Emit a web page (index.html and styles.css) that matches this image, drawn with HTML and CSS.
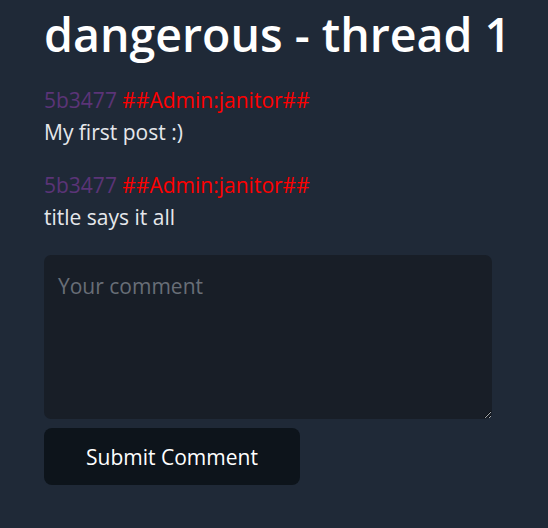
FILE: index.html
```html
<!DOCTYPE html>
<html>
<head>
<meta charset="utf-8">
<link rel="stylesheet" href="styles.css">
</head>
<body>
<main class="page">
  <h1 class="title">dangerous - thread 1</h1>
  <div class="post">
    <div class="meta"><span class="user">5b3477</span> <span class="role">##Admin:janitor##</span></div>
    <div class="body">My first post :)</div>
  </div>
  <div class="post">
    <div class="meta"><span class="user">5b3477</span> <span class="role">##Admin:janitor##</span></div>
    <div class="body">title says it all</div>
  </div>
  <form class="form">
    <textarea class="comment" placeholder="Your comment"></textarea>
    <button type="button" class="submit">Submit Comment</button>
  </form>
</main>
</body>
</html>
```

FILE: styles.css
```css
html, body {
  margin: 0;
  padding: 0;
  background: #1f2937;
  height: 100%;
}
body {
  font-family: "Open Sans", "Noto Sans", sans-serif;
  color: #e5e7eb;
}
.page {
  padding: 4px 44px;
}
.title {
  margin: 0 0 20px 0;
  font-size: 46.5px;
  font-weight: 600;
  color: #ffffff;
  line-height: 60px;
  white-space: nowrap;
}
.post {
  margin-bottom: 21px;
  font-size: 21px;
  line-height: 32px;
}
.user { color: #5b3477; }
.role { color: #ff0000; }
.body { color: #e5e7eb; }
.form {
  display: flex;
  flex-direction: column;
  align-items: flex-start;
  gap: 9px;
  padding-top: 1px;
}
.comment {
  box-sizing: border-box;
  width: 448px;
  height: 164px;
  background: #181e27;
  border: none;
  border-radius: 7px;
  padding: 17px 14px;
  font-family: inherit;
  font-size: 21px;
  line-height: 28px;
  color: #e5e7eb;
  outline: none;
  resize: vertical;
}
.comment::placeholder { color: #686e77; }
.submit {
  width: 256px;
  height: 57px;
  background: #0d141b;
  color: #ffffff;
  border: none;
  border-radius: 8px;
  font-family: inherit;
  font-size: 21px;
}
```
